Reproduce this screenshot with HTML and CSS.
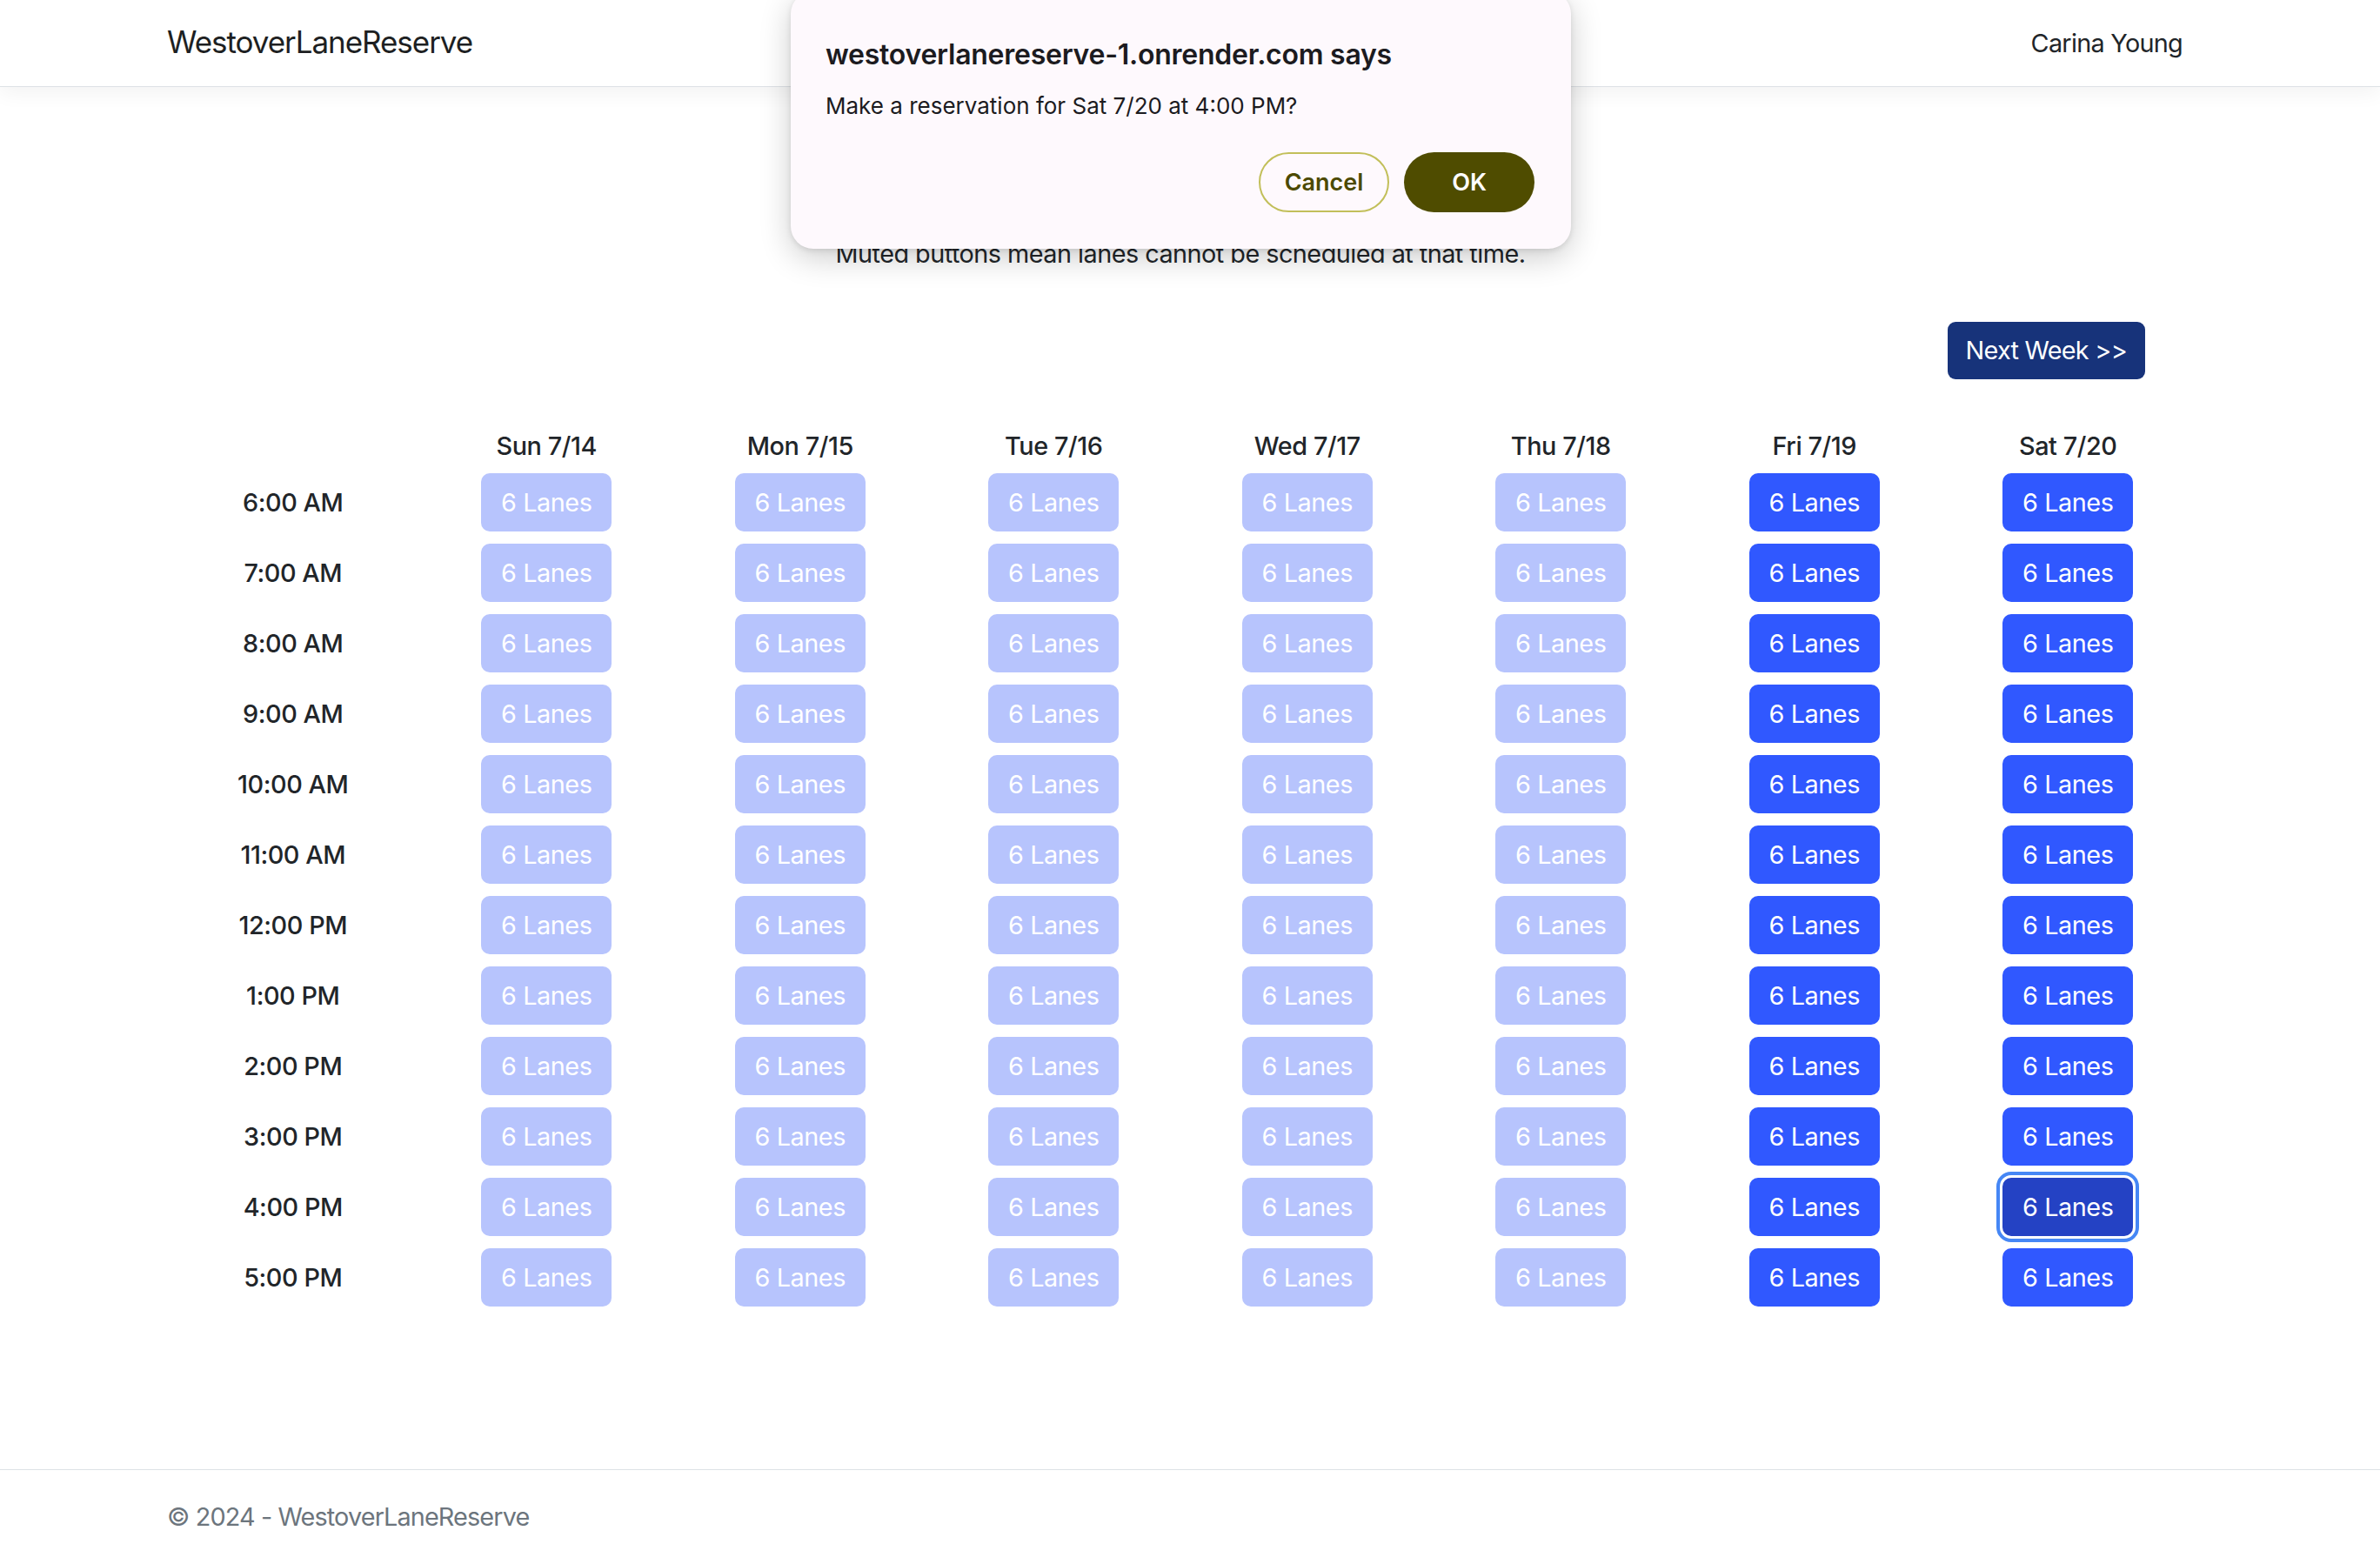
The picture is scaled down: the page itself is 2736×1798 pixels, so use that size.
FILE: index.html
```html
<!DOCTYPE html>
<html lang="en">
<head>
<meta charset="utf-8">
<title>WestoverLaneReserve</title>
<link rel="stylesheet" href="styles.css">
</head>
<body>
<header class="site-header">
  <a class="brand" href="#">WestoverLaneReserve</a>
  <span class="user">Carina Young</span>
</header>

<main class="content">
  <p class="legend">Muted buttons mean lanes cannot be scheduled at that time.</p>
  <div class="week-nav"><button class="next-week">Next Week &gt;&gt;</button></div>

  <div class="schedule">
    <div class="cell head"></div>
    <div class="cell head">Sun 7/14</div>
    <div class="cell head">Mon 7/15</div>
    <div class="cell head">Tue 7/16</div>
    <div class="cell head">Wed 7/17</div>
    <div class="cell head">Thu 7/18</div>
    <div class="cell head">Fri 7/19</div>
    <div class="cell head">Sat 7/20</div>

    <div class="cell time">6:00 AM</div>
    <div class="cell"><button class="lane muted">6 Lanes</button></div>
    <div class="cell"><button class="lane muted">6 Lanes</button></div>
    <div class="cell"><button class="lane muted">6 Lanes</button></div>
    <div class="cell"><button class="lane muted">6 Lanes</button></div>
    <div class="cell"><button class="lane muted">6 Lanes</button></div>
    <div class="cell"><button class="lane">6 Lanes</button></div>
    <div class="cell"><button class="lane">6 Lanes</button></div>

    <div class="cell time">7:00 AM</div>
    <div class="cell"><button class="lane muted">6 Lanes</button></div>
    <div class="cell"><button class="lane muted">6 Lanes</button></div>
    <div class="cell"><button class="lane muted">6 Lanes</button></div>
    <div class="cell"><button class="lane muted">6 Lanes</button></div>
    <div class="cell"><button class="lane muted">6 Lanes</button></div>
    <div class="cell"><button class="lane">6 Lanes</button></div>
    <div class="cell"><button class="lane">6 Lanes</button></div>

    <div class="cell time">8:00 AM</div>
    <div class="cell"><button class="lane muted">6 Lanes</button></div>
    <div class="cell"><button class="lane muted">6 Lanes</button></div>
    <div class="cell"><button class="lane muted">6 Lanes</button></div>
    <div class="cell"><button class="lane muted">6 Lanes</button></div>
    <div class="cell"><button class="lane muted">6 Lanes</button></div>
    <div class="cell"><button class="lane">6 Lanes</button></div>
    <div class="cell"><button class="lane">6 Lanes</button></div>

    <div class="cell time">9:00 AM</div>
    <div class="cell"><button class="lane muted">6 Lanes</button></div>
    <div class="cell"><button class="lane muted">6 Lanes</button></div>
    <div class="cell"><button class="lane muted">6 Lanes</button></div>
    <div class="cell"><button class="lane muted">6 Lanes</button></div>
    <div class="cell"><button class="lane muted">6 Lanes</button></div>
    <div class="cell"><button class="lane">6 Lanes</button></div>
    <div class="cell"><button class="lane">6 Lanes</button></div>

    <div class="cell time">10:00 AM</div>
    <div class="cell"><button class="lane muted">6 Lanes</button></div>
    <div class="cell"><button class="lane muted">6 Lanes</button></div>
    <div class="cell"><button class="lane muted">6 Lanes</button></div>
    <div class="cell"><button class="lane muted">6 Lanes</button></div>
    <div class="cell"><button class="lane muted">6 Lanes</button></div>
    <div class="cell"><button class="lane">6 Lanes</button></div>
    <div class="cell"><button class="lane">6 Lanes</button></div>

    <div class="cell time">11:00 AM</div>
    <div class="cell"><button class="lane muted">6 Lanes</button></div>
    <div class="cell"><button class="lane muted">6 Lanes</button></div>
    <div class="cell"><button class="lane muted">6 Lanes</button></div>
    <div class="cell"><button class="lane muted">6 Lanes</button></div>
    <div class="cell"><button class="lane muted">6 Lanes</button></div>
    <div class="cell"><button class="lane">6 Lanes</button></div>
    <div class="cell"><button class="lane">6 Lanes</button></div>

    <div class="cell time">12:00 PM</div>
    <div class="cell"><button class="lane muted">6 Lanes</button></div>
    <div class="cell"><button class="lane muted">6 Lanes</button></div>
    <div class="cell"><button class="lane muted">6 Lanes</button></div>
    <div class="cell"><button class="lane muted">6 Lanes</button></div>
    <div class="cell"><button class="lane muted">6 Lanes</button></div>
    <div class="cell"><button class="lane">6 Lanes</button></div>
    <div class="cell"><button class="lane">6 Lanes</button></div>

    <div class="cell time">1:00 PM</div>
    <div class="cell"><button class="lane muted">6 Lanes</button></div>
    <div class="cell"><button class="lane muted">6 Lanes</button></div>
    <div class="cell"><button class="lane muted">6 Lanes</button></div>
    <div class="cell"><button class="lane muted">6 Lanes</button></div>
    <div class="cell"><button class="lane muted">6 Lanes</button></div>
    <div class="cell"><button class="lane">6 Lanes</button></div>
    <div class="cell"><button class="lane">6 Lanes</button></div>

    <div class="cell time">2:00 PM</div>
    <div class="cell"><button class="lane muted">6 Lanes</button></div>
    <div class="cell"><button class="lane muted">6 Lanes</button></div>
    <div class="cell"><button class="lane muted">6 Lanes</button></div>
    <div class="cell"><button class="lane muted">6 Lanes</button></div>
    <div class="cell"><button class="lane muted">6 Lanes</button></div>
    <div class="cell"><button class="lane">6 Lanes</button></div>
    <div class="cell"><button class="lane">6 Lanes</button></div>

    <div class="cell time">3:00 PM</div>
    <div class="cell"><button class="lane muted">6 Lanes</button></div>
    <div class="cell"><button class="lane muted">6 Lanes</button></div>
    <div class="cell"><button class="lane muted">6 Lanes</button></div>
    <div class="cell"><button class="lane muted">6 Lanes</button></div>
    <div class="cell"><button class="lane muted">6 Lanes</button></div>
    <div class="cell"><button class="lane">6 Lanes</button></div>
    <div class="cell"><button class="lane">6 Lanes</button></div>

    <div class="cell time">4:00 PM</div>
    <div class="cell"><button class="lane muted">6 Lanes</button></div>
    <div class="cell"><button class="lane muted">6 Lanes</button></div>
    <div class="cell"><button class="lane muted">6 Lanes</button></div>
    <div class="cell"><button class="lane muted">6 Lanes</button></div>
    <div class="cell"><button class="lane muted">6 Lanes</button></div>
    <div class="cell"><button class="lane">6 Lanes</button></div>
    <div class="cell"><button class="lane selected">6 Lanes</button></div>

    <div class="cell time">5:00 PM</div>
    <div class="cell"><button class="lane muted">6 Lanes</button></div>
    <div class="cell"><button class="lane muted">6 Lanes</button></div>
    <div class="cell"><button class="lane muted">6 Lanes</button></div>
    <div class="cell"><button class="lane muted">6 Lanes</button></div>
    <div class="cell"><button class="lane muted">6 Lanes</button></div>
    <div class="cell"><button class="lane">6 Lanes</button></div>
    <div class="cell"><button class="lane">6 Lanes</button></div>
  </div>
</main>

<footer class="site-footer">
  <div class="footer-inner">&copy; 2024 - WestoverLaneReserve</div>
</footer>

<div class="dialog" role="alertdialog">
  <div class="dialog-title">westoverlanereserve-1.onrender.com says</div>
  <div class="dialog-message">Make a reservation for Sat 7/20 at 4:00 PM?</div>
  <div class="dialog-actions">
    <button class="dlg-btn cancel">Cancel</button>
    <button class="dlg-btn ok">OK</button>
  </div>
</div>
</body>
</html>
```
FILE: styles.css
```css
* { box-sizing: border-box; }

html, body {
  margin: 0;
  padding: 0;
}

body {
  font-family: Inter, "Noto Sans", "Liberation Sans", sans-serif;
  font-size: 28.8px;
  line-height: 1.5;
  color: #212529;
  background: #fff;
  min-height: 1798px;
  display: flex;
  flex-direction: column;
  position: relative;
  overflow: hidden;
}

/* Header */
.site-header {
  height: 100px;
  border-bottom: 1px solid #dee2e6;
  box-shadow: 0 7px 22px rgba(0, 0, 0, 0.05);
  display: flex;
  align-items: center;
  justify-content: space-between;
  padding: 0 227px 0 192px;
  background: #fff;
}

.brand {
  font-size: 35px;
  color: #1d1f22;
  text-decoration: none;
  letter-spacing: -0.03em;
  padding-bottom: 2px;
}

.user {
  font-size: 28.8px;
  color: #212529;
  letter-spacing: -0.025em;
}

/* Main */
.content {
  padding: 0 213px 0 191px;
}

.legend {
  margin: 170px 0 0;
  line-height: 43px;
  text-align: center;
  letter-spacing: -0.018em;
}

.week-nav {
  margin-top: 57px;
  display: flex;
  justify-content: flex-end;
  padding-right: 57px;
}

.next-week {
  height: 66px;
  padding: 0 21px;
  background: #17337a;
  color: #fff;
  border: none;
  border-radius: 9px;
  font: inherit;
  letter-spacing: -0.025em;
}

.schedule {
  margin-top: 49px;
  display: grid;
  grid-template-columns: repeat(8, 1fr);
  grid-template-rows: 52px;
  grid-auto-rows: 81px;
}

.cell {
  display: flex;
  align-items: center;
  justify-content: center;
}

.head, .time {
  font-weight: 500;
  letter-spacing: -0.015em;
}

.head {
  padding-top: 3px;
}

.lane {
  height: 67px;
  padding: 0 23px;
  border: none;
  border-radius: 10px;
  background: #3058ff;
  color: #fff;
  font: inherit;
  letter-spacing: -0.015em;
}

.lane.muted {
  background: #b7c4fd;
}

.lane.selected {
  background: #2442c4;
  outline: 4px solid #4687f5;
  outline-offset: 3px;
}

/* Footer */
.site-footer {
  margin-top: auto;
  border-top: 1px solid #dee2e6;
  height: 109px;
  line-height: 108px;
  color: #6c757d;
  white-space: nowrap;
}

.footer-inner {
  padding-left: 192px;
  letter-spacing: -0.03em;
}

/* Native-style confirm dialog */
.dialog {
  position: absolute;
  top: -10px;
  left: 909px;
  width: 897px;
  height: 296px;
  background: #fef9fd;
  border-radius: 26px;
  box-shadow: 0 10px 36px rgba(0, 0, 0, 0.2), 0 2px 6px rgba(0, 0, 0, 0.1);
  padding: 56px 42px 0 40px;
  display: flex;
  flex-direction: column;
}

.dialog-title {
  font-size: 32px;
  font-weight: 600;
  line-height: 34px;
  color: #1c1b1f;
  letter-spacing: -0.008em;
}

.dialog-message {
  margin-top: 25px;
  font-size: 26px;
  line-height: 34px;
  color: #1c1b1f;
}

.dialog-actions {
  margin-top: 36px;
  display: flex;
  justify-content: flex-end;
  gap: 17px;
}

.dlg-btn {
  width: 150px;
  height: 69px;
  border-radius: 35px;
  font-family: inherit;
  font-size: 27px;
  font-weight: 600;
}

.dlg-btn.cancel {
  background: transparent;
  border: 2px solid #c2bf5a;
  color: #4c4900;
}

.dlg-btn.ok {
  background: #4f4c00;
  border: none;
  color: #fff;
}
```
